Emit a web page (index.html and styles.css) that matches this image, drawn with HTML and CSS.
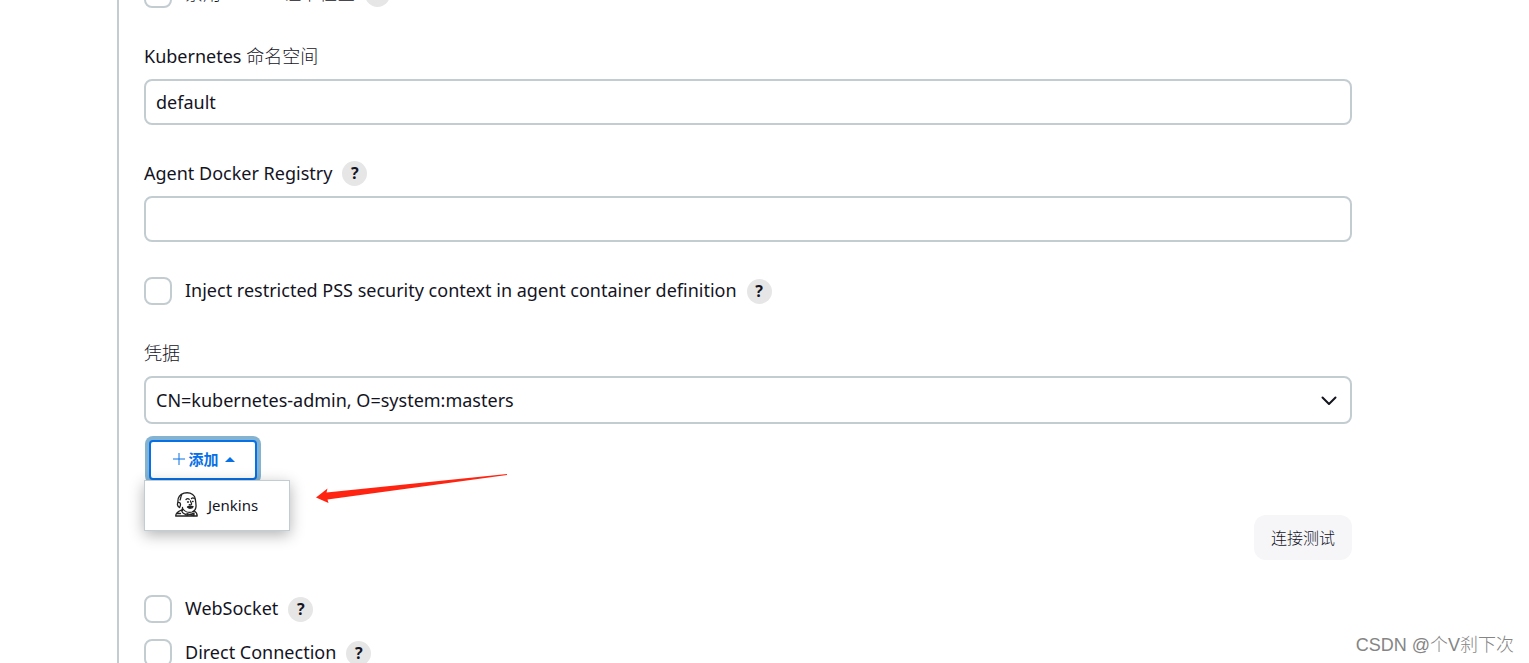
FILE: index.html
```html
<!DOCTYPE html>
<html lang="zh-CN">
<head>
<meta charset="utf-8">
<title>Kubernetes</title>
<link rel="stylesheet" href="styles.css">
</head>
<body>
<main class="page">
  <form class="panel">
    <div class="check-row">
      <input class="check" type="checkbox" id="https">
      <label class="light" for="https">禁用 HTTPS 证书检查</label>
      <button type="button" class="help">?</button>
    </div>
    <div class="field">
      <div class="field-label"><label for="ns">Kubernetes <span class="light">命名空间</span></label></div>
      <input class="text-input" type="text" id="ns" value="default">
    </div>
    <div class="field">
      <div class="field-label"><label for="registry">Agent Docker Registry</label><button type="button" class="help">?</button></div>
      <input class="text-input" type="text" id="registry">
    </div>
    <div class="check-row">
      <input class="check" type="checkbox" id="pss">
      <label for="pss">Inject restricted PSS security context in agent container definition</label>
      <button type="button" class="help">?</button>
    </div>
    <div class="field">
      <div class="field-label"><label class="light" for="cred">凭据</label></div>
      <div class="select-wrap">
        <select class="select" id="cred"><option>CN=kubernetes-admin, O=system:masters</option></select>
        <svg class="chevron" viewBox="0 0 16 10" aria-hidden="true"><path d="M1.500 1.500 8 8l6.500-6.500" fill="none" stroke="#14141f" stroke-width="2" stroke-linecap="round" stroke-linejoin="round"/></svg>
      </div>
      <div class="add-wrap">
        <button type="button" class="add">
          <svg class="plus" viewBox="0 0 12 12" aria-hidden="true"><path d="M6 0v12M0 6h12" stroke="#0670e6" stroke-width="1"/></svg>
          <span>添加</span>
          <svg class="caret" viewBox="0 0 10 5" aria-hidden="true"><path d="M0 5 5 0l5 5z" fill="#0670e6"/></svg>
        </button>
        <div class="menu">
          <button type="button" class="menu-item">
            <svg class="jenkins" viewBox="0 0 23 25" fill="none" stroke="#222" stroke-width="1.300" stroke-linecap="round" stroke-linejoin="round" aria-hidden="true">
              <path d="M4.500 15.500C2.300 14.500 2 12 3 10.500 2.500 6 5 2.500 9 1.200c4-1.200 8.500 0 10.500 3.300 1.300 2.500 1.200 5.500 1.500 8.500.3 3.500-1 6-4 7-3.500 1-7.500-.5-9.500-3.500"/>
              <path d="M6.500 3.500C5.500 5 6 6 5 8M3 10.500c1.500-.5 2.500.5 2.500 2s-.5 2-1 3M7.500 15.500v3"/>
              <path d="M11 7.500c1-1 2.300-1 3.200-.2M16.500 6.500c.8-.7 2-.7 2.800 0M12.500 10h1M17.500 9.500h.6M15.500 9c.2 1.800 2 2.500.8 3.600-.6.500-1.400.3-2 0"/>
              <path d="M12.500 15c1.500-1.300 3.500-1 5.500-.4-1 2-4 2.200-5.500.4z" fill="#222"/>
              <path d="M6.500 18C4 19 .8 21 .7 24h21.500c0-2.500-.7-4-3-5M6.500 18c.3 2 2 3.800 4.500 4.500M2 21.500h3.500"/>
              <path d="m12 21.500 3 1 4-1.500v2.500l-4-1-3 1z" fill="#777"/>
            </svg>
            <span>Jenkins</span>
          </button>
        </div>
        <svg class="pointer" viewBox="0 0 192 30" aria-hidden="true"><path d="M0 23.500 11.500 14.500 10.500 18.500 191 0v1L11.500 25.500 12.500 29z" fill="#ff2412"/></svg>
      </div>
    </div>
    <div class="actions"><button type="button" class="test">连接测试</button></div>
    <div class="check-list">
      <div class="check-row">
        <input class="check" type="checkbox" id="ws">
        <label for="ws">WebSocket</label>
        <button type="button" class="help">?</button>
      </div>
      <div class="check-row">
        <input class="check" type="checkbox" id="direct">
        <label for="direct">Direct Connection</label>
        <button type="button" class="help">?</button>
      </div>
    </div>
  </form>
</main>
<div class="watermark">CSDN @个V刹下次</div>
</body>
</html>
```
FILE: styles.css
```css
* { box-sizing: border-box; }

body {
  margin: 0;
  height: 100vh;
  overflow: hidden;
  background: #fff;
  color: #14141f;
  font: 400 18px/26px "Noto Sans", "Noto Sans CJK SC", sans-serif;
}

button, input, select { font: inherit; color: inherit; margin: 0; }

.light { font-weight: 300; }

.page { padding: 0 177px 0 117px; }

.panel {
  display: flex;
  flex-direction: column;
  gap: 35px;
  margin-top: -20px;
  padding-left: 25px;
  border-left: 2px solid #c3cdd1;
}

.field { display: flex; flex-direction: column; }

.field-label {
  display: flex;
  align-items: center;
  gap: 10px;
  margin-bottom: 10px;
}

.check-row { display: flex; align-items: center; height: 28px; }
.check-row label { padding-bottom: 2px; }
.check-row .help { margin-left: 10px; }
.check-list { display: flex; flex-direction: column; gap: 16px; }

.check {
  appearance: none;
  flex: none;
  width: 28px;
  height: 28px;
  margin-right: 13px;
  border: 2px solid #c3cdd1;
  border-radius: 8px;
  background: #fff;
}

.help {
  flex: none;
  width: 25px;
  height: 25px;
  padding: 0;
  border: 0;
  border-radius: 50%;
  background: #e6e6e6;
  font-size: 16px;
  font-weight: 700;
  line-height: 25px;
}

.text-input, .select {
  width: 100%;
  height: 46px;
  padding: 0 10px;
  border: 2px solid #c3cdd1;
  border-radius: 8px;
  background: #fff;
}

.select-wrap { position: relative; }
.select { appearance: none; display: block; height: 48px; }

.chevron {
  position: absolute;
  right: 15px;
  top: 20px;
  width: 16px;
  height: 10px;
  pointer-events: none;
}

.add-wrap {
  position: relative;
  align-self: flex-start;
  margin-top: 16px;
  padding-left: 5px;
}

.add {
  display: flex;
  align-items: center;
  justify-content: center;
  width: 108px;
  height: 40px;
  padding: 0 0 2px 2px;
  border: 2px solid #0670e6;
  border-radius: 4px;
  background: #fff;
  box-shadow: 0 0 0 4px #83b3d1;
  color: #0670e6;
  font-size: 15px;
  font-weight: 700;
}

.plus { width: 12px; height: 12px; margin-right: 3px; }
.caret { width: 10px; height: 5px; margin-left: 6px; }

.menu {
  position: absolute;
  left: 0;
  top: 100%;
  width: 146px;
  border: 1px solid #c3cdd1;
  background: #fff;
  box-shadow: 0 4px 14px rgba(0, 0, 0, 0.3);
}

.menu-item {
  display: flex;
  align-items: center;
  gap: 10px;
  width: 100%;
  height: 49px;
  padding: 0 0 2px 30px;
  border: 0;
  background: none;
  font-size: 15px;
}

.jenkins { width: 23px; height: 25px; }

.pointer {
  position: absolute;
  left: 172px;
  top: 34px;
  width: 192px;
  height: 30px;
}

.actions { display: flex; justify-content: flex-end; }

.test {
  height: 45px;
  padding: 0 17px;
  border: 0;
  border-radius: 12px;
  background: #f6f6f9;
  font-size: 16px;
  font-weight: 300;
}

.watermark {
  position: absolute;
  right: 15px;
  bottom: 5px;
  color: #858585;
  font-family: "Liberation Sans", "Noto Sans CJK SC", sans-serif;
  font-size: 18px;
  font-weight: 300;
}
```
